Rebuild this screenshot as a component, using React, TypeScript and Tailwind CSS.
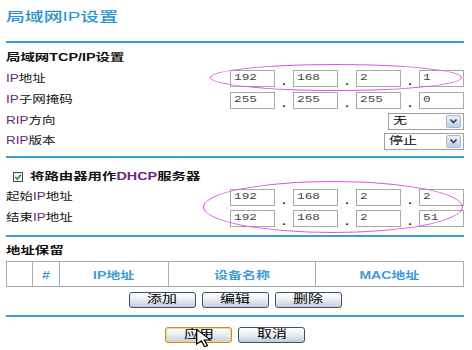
import type { ReactNode } from 'react';

// Texte étiré horizontalement comme dans la capture d'origine.
function Lbl({ children, bold }: { children: ReactNode; bold?: boolean }) {
  return (
    <span
      className={
        bold
          ? 'inline-block origin-left scale-x-[1.44] whitespace-nowrap text-[10px] font-bold leading-none text-[#111]'
          : 'inline-block origin-left scale-x-[1.35] whitespace-nowrap text-[10px] leading-none text-[#111]'
      }
    >
      {children}
    </span>
  );
}

function P({ children }: { children: ReactNode }) {
  return <span className="text-[#6a2580]">{children}</span>;
}

function Octets({ parts }: { parts: string[] }) {
  return (
    <div className="ml-auto flex items-end">
      {parts.map((p, i) => (
        <div key={i} className="flex items-end">
          {i > 0 && (
            <span className="w-[18px] text-center text-[11px] font-bold leading-none text-black">.</span>
          )}
          <div className="flex h-[17px] w-[45px] items-center border border-[#a8a8a8] bg-white pl-[3px]">
            <span className="inline-block origin-left scale-x-[1.42] font-['Liberation_Mono',monospace] text-[9px] leading-none text-[#444]">
              {p}
            </span>
          </div>
        </div>
      ))}
    </div>
  );
}

function Select({ value, wide }: { value: string; wide?: boolean }) {
  return (
    <div
      className={`ml-auto flex h-[17px] items-center border border-[#a0a0a0] bg-white pl-[4px] pr-[2px] ${
        wide ? 'w-[80px]' : 'w-[76px]'
      }`}
    >
      <span className="inline-block origin-left scale-x-[1.4] text-[10px] leading-none text-black">{value}</span>
      <span className="ml-auto flex h-[13px] w-[15px] items-center justify-center rounded-[2px] border border-[#a6b9d3] bg-gradient-to-b from-[#eaf1fa] to-[#bccfe8]">
        <svg width="9" height="6" viewBox="0 0 9 6">
          <path d="M1.5 1.5 L4.5 4.5 L7.5 1.5" fill="none" stroke="#2d3f5e" strokeWidth="1.6" />
        </svg>
      </span>
    </div>
  );
}

function Btn({ label, active }: { label: string; active?: boolean }) {
  return (
    <button
      className={`flex h-[16px] w-[67px] items-center justify-center rounded-[3px] border bg-gradient-to-b from-white via-[#e8ecf2] to-[#c2ccda] pb-[1px] ${
        active ? 'border-[#c98a2c] shadow-[inset_0_0_0_1px_#f4d59a]' : 'border-[#3f4f68]'
      }`}
    >
      <span className="inline-block scale-x-[1.36] text-[11px] leading-none text-black">{label}</span>
    </button>
  );
}

function Rule() {
  return <div className="h-[2px] bg-[#3a9dd6]" />;
}

function Th({ children, className }: { children?: ReactNode; className: string }) {
  return (
    <th className={`h-[17px] border border-[#a9a9a9] p-0 text-center ${className}`}>
      <span className="inline-block scale-x-[1.4] whitespace-nowrap text-[10px] font-bold leading-none text-[#3d9bd8]">
        {children}
      </span>
    </th>
  );
}

export default function App() {
  return (
    <div className="relative h-[350px] w-[472px] overflow-hidden bg-white pl-[6px] pr-[8px] font-['Liberation_Sans','Noto_Sans_CJK_SC',sans-serif]">
      <div className="h-[41px] pt-[4px]">
        <span className="inline-block origin-left scale-x-[1.45] whitespace-nowrap text-[13px] font-medium leading-none text-[#2a92d4]">
          局域网IP设置
        </span>
      </div>
      <Rule />

      <div className="mt-[5px] flex h-[20px] items-center">
        <Lbl bold>局域网TCP/IP设置</Lbl>
      </div>
      <div className="flex h-[21px] items-center">
        <Lbl>
          <P>IP</P>地址
        </Lbl>
        <Octets parts={['192', '168', '2', '1']} />
      </div>
      <div className="flex h-[22px] items-center">
        <Lbl>
          <P>IP</P>子网掩码
        </Lbl>
        <Octets parts={['255', '255', '255', '0']} />
      </div>
      <div className="flex h-[20px] items-center">
        <Lbl>
          <P>RIP</P>方向
        </Lbl>
        <Select value="无" />
      </div>
      <div className="flex h-[20px] items-center">
        <Lbl>
          <P>RIP</P>版本
        </Lbl>
        <Select value="停止" wide />
      </div>
      <div className="mt-[5px]">
        <Rule />
      </div>

      <div className="mt-[9px] flex h-[20px] items-center gap-[7px] pl-[7px]">
        <svg width="10" height="10" viewBox="0 0 10 10">
          <rect x="0.5" y="0.5" width="9" height="9" fill="#f4f7fb" stroke="#3c4b5c" />
          <path d="M2.2 5 L4.2 7 L7.9 2.8" fill="none" stroke="#1f9a2a" strokeWidth="1.7" />
        </svg>
        <Lbl bold>
          将路由器用作<P>DHCP</P>服务器
        </Lbl>
      </div>
      <div className="flex h-[20px] items-center">
        <Lbl>
          起始<P>IP</P>地址
        </Lbl>
        <Octets parts={['192', '168', '2', '2']} />
      </div>
      <div className="flex h-[22px] items-center">
        <Lbl>
          结束<P>IP</P>地址
        </Lbl>
        <Octets parts={['192', '168', '2', '51']} />
      </div>
      <div className="mt-[6px]">
        <Rule />
      </div>

      <div className="mt-[6px] flex h-[16px] items-center">
        <Lbl bold>地址保留</Lbl>
      </div>
      <table className="mt-[2px] w-[458px] table-fixed border-collapse">
        <thead>
          <tr>
            <Th className="w-[26px]" />
            <Th className="w-[27px]">#</Th>
            <Th className="w-[109px]">IP地址</Th>
            <Th className="w-[146px]">设备名称</Th>
            <Th className="w-[148px]">MAC地址</Th>
          </tr>
        </thead>
      </table>
      <div className="mt-[5px] flex justify-center gap-[6px]">
        <Btn label="添加" />
        <Btn label="编辑" />
        <Btn label="删除" />
      </div>
      <div className="mt-[7px]">
        <Rule />
      </div>
      <div className="mt-[10px] flex justify-center gap-[6px]">
        <Btn label="应用" active />
        <Btn label="取消" />
      </div>

      {/* annotations en surimpression */}
      <div className="absolute left-[210px] top-[64px] h-[27px] w-[252px] rounded-[50%] border border-[#e052e4]" />
      <div className="absolute left-[203px] top-[181px] h-[52px] w-[260px] rounded-[50%] border border-[#e052e4]" />
      <svg className="absolute left-[196px] top-[329px]" width="16" height="19" viewBox="0 0 12 19" preserveAspectRatio="none">
        <path d="M0.5 0.5 L0.5 15 L4 11.8 L6.4 17.6 L8.6 16.7 L6.2 11 L10.8 11 Z" fill="white" stroke="black" strokeWidth="1" />
      </svg>
    </div>
  );
}
